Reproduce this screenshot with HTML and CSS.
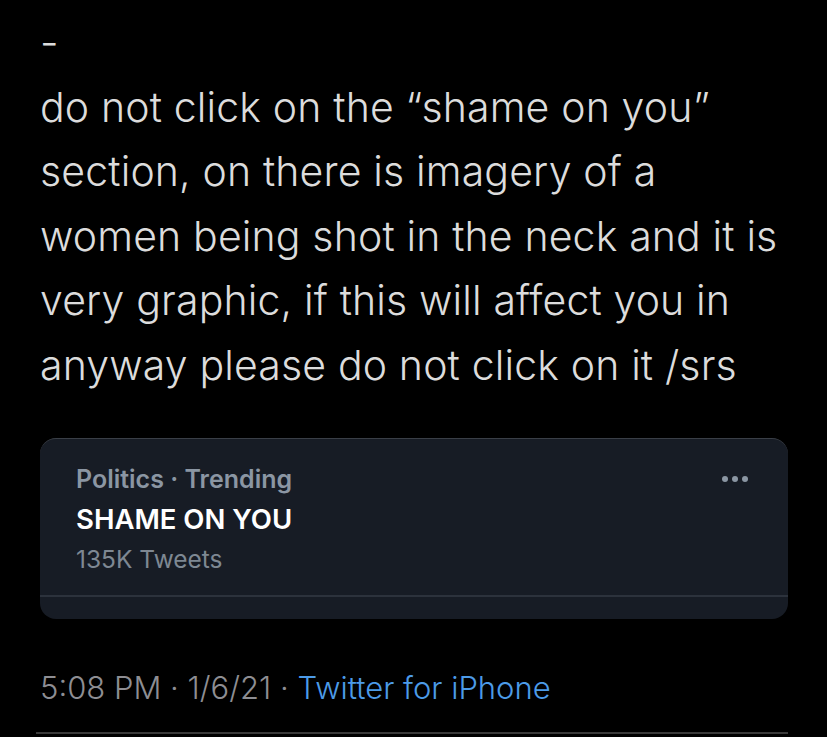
FILE: index.html
```html
<!DOCTYPE html>
<html>
<head>
<meta charset="utf-8">
<link rel="stylesheet" href="styles.css">
</head>
<body>
<main class="tweet">
  <div class="body-text">
    <p class="line">-</p>
    <p class="line">do not click on the “shame on you”</p>
    <p class="line">section, on there is imagery of a</p>
    <p class="line">women being shot in the neck and it is</p>
    <p class="line">very graphic, if this will affect you in</p>
    <p class="line">anyway please do not click on it /srs</p>
  </div>
  <section class="card">
    <div class="card-main">
      <div class="card-text">
        <div class="meta">Politics · Trending</div>
        <div class="title">SHAME ON YOU</div>
        <div class="count">135K Tweets</div>
      </div>
      <div class="more"><span></span><span></span><span></span></div>
    </div>
    <div class="card-foot"></div>
  </section>
  <div class="footer">
    <span class="time">5:08 PM · 1/6/21 · </span><span class="source">Twitter for iPhone</span>
  </div>
</main>
</body>
</html>
```
FILE: styles.css
```css
html, body {
  margin: 0;
  padding: 0;
  background: #000;
}
body {
  width: 827px;
  height: 737px;
  overflow: hidden;
  font-family: Inter, "Noto Sans", sans-serif;
}
.tweet {
  padding: 10px 39px 0 40px;
  display: flex;
  flex-direction: column;
}
.body-text {
  color: #dcdcdc;
  font-size: 41px;
  font-weight: 300;
  line-height: 64.5px;
  letter-spacing: 0.15px;
}
.line {
  margin: 0;
  white-space: nowrap;
}
.card {
  margin-top: 41px;
  background: #171c25;
  border-radius: 16px;
  border-top: 1px solid #3a3f47;
  display: flex;
  flex-direction: column;
  overflow: hidden;
}
.card-main {
  display: flex;
  justify-content: space-between;
  padding: 20px 40px 0 36px;
  height: 158px;
  box-sizing: border-box;
  border-bottom: 2px solid #2c323c;
}
.card-text {
  display: flex;
  flex-direction: column;
}
.meta {
  color: #8b96a3;
  font-size: 25px;
  font-weight: 600;
  line-height: 40px;
}
.title {
  color: #fff;
  font-size: 27.5px;
  font-weight: 600;
  line-height: 40px;
}
.count {
  color: #7e8893;
  font-size: 24.5px;
  font-weight: 400;
  line-height: 40px;
}
.more {
  display: flex;
  gap: 4px;
  margin-top: 17px;
}
.more span {
  width: 6px;
  height: 6px;
  border-radius: 50%;
  background: #8b96a3;
}
.card-foot {
  height: 22px;
}
.footer {
  margin-top: 49px;
  line-height: 40px;
  padding-bottom: 24px;
  border-bottom: 2px solid #3a3a3a;
  font-size: 31px;
  font-weight: 300;
  white-space: nowrap;
  margin-left: -4px;
  padding-left: 4px;
}
.time {
  color: #8e8e93;
}
.source {
  color: #4c9be8;
}
```
